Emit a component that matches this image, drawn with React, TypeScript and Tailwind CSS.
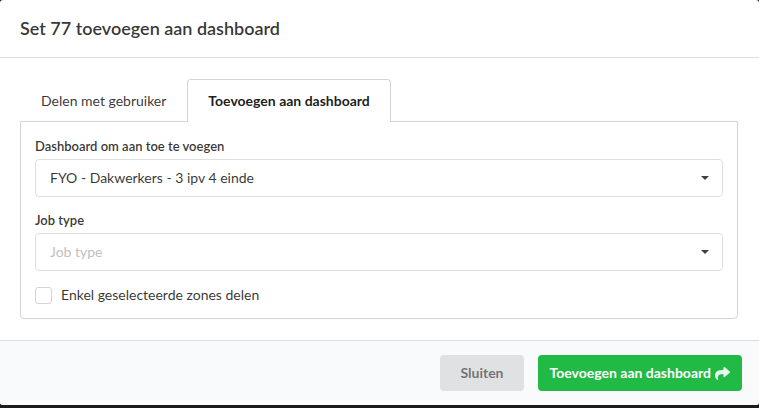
import React, { useState } from 'react';
import { FaShare } from 'react-icons/fa';

// Select with its label above and a small caret on the right
function SelectField({
  id,
  label,
  options,
  placeholder,
  initial = '',
}: {
  id: string;
  label: string;
  options: string[];
  placeholder?: string;
  initial?: string;
}) {
  const [value, setValue] = useState(initial);

  return (
    <div>
      <label htmlFor={id} className="mb-1 block text-[13px] leading-[18px] font-semibold">
        {label}
      </label>
      <div className="relative">
        <select
          id={id}
          value={value}
          onChange={(e) => setValue(e.target.value)}
          className={`block h-[38px] w-full appearance-none rounded border border-[#dededf] bg-white px-3.5 text-sm ${
            value ? 'text-black/80' : 'text-[#bfbfbf]'
          }`}
        >
          {placeholder && <option value="">{placeholder}</option>}
          {options.map((o) => (
            <option key={o} value={o}>
              {o}
            </option>
          ))}
        </select>
        <svg
          viewBox="0 0 8 4"
          className="pointer-events-none absolute top-[17px] right-3.5 h-1 w-2 fill-[#404040]"
          aria-hidden="true"
        >
          <path d="M0 0h8L4 4z" />
        </svg>
      </div>
    </div>
  );
}

export default function App() {
  const [tab, setTab] = useState('dashboard');
  const [onlySelected, setOnlySelected] = useState(false);

  const tabs = [
    { id: 'user', label: 'Delen met gebruiker' },
    { id: 'dashboard', label: 'Toevoegen aan dashboard' },
  ];

  return (
    <div className="min-h-screen bg-[#1b1c1d] font-['Lato',sans-serif] text-sm text-black/80">
      <div role="dialog" aria-labelledby="title" className="overflow-hidden rounded-[3px] bg-white">
        <header className="border-b border-[#dededf] px-5 py-4">
          <h1 id="title" className="text-lg leading-[25px] font-semibold">
            Set 77 toevoegen aan dashboard
          </h1>
        </header>

        <div className="py-[21px] pr-[21px] pl-5">
          <div role="tablist" className="flex">
            {tabs.map((t) => (
              <button
                key={t.id}
                type="button"
                role="tab"
                aria-selected={tab === t.id}
                onClick={() => setTab(t.id)}
                className={`relative z-10 -mb-px h-[43px] rounded-t border border-b-0 px-5 text-sm ${
                  tab === t.id
                    ? 'border-[#d4d4d5] bg-white font-bold text-black/90'
                    : 'border-transparent'
                }`}
              >
                {t.label}
              </button>
            ))}
          </div>

          <form className="rounded-b border border-[#d4d4d5] px-3.5 pt-[15px] pb-[13px]">
            <SelectField
              id="dashboard"
              label="Dashboard om aan toe te voegen"
              options={['FYO - Dakwerkers - 3 ipv 4 einde']}
              initial="FYO - Dakwerkers - 3 ipv 4 einde"
            />
            <div className="mt-3.5">
              <SelectField id="job" label="Job type" options={[]} placeholder="Job type" />
            </div>
            <label className="mt-3.5 flex items-center gap-[9px] leading-5">
              <input
                type="checkbox"
                checked={onlySelected}
                onChange={(e) => setOnlySelected(e.target.checked)}
                className="size-[17px] appearance-none rounded-[3px] border border-[#d4d4d5] bg-white checked:bg-[#21ba45]"
              />
              Enkel geselecteerde zones delen
            </label>
          </form>
        </div>

        <footer className="flex justify-end gap-3.5 border-t border-[#dededf] bg-[#f9fafb] px-[17px] py-3.5">
          <button type="button" className="h-9 rounded bg-[#e0e1e2] px-5 font-bold text-black/50">
            Sluiten
          </button>
          <button
            type="button"
            className="flex h-9 items-center gap-1 rounded bg-[#21ba45] px-3 font-bold text-white"
          >
            Toevoegen aan dashboard
            <FaShare className="size-[15px] opacity-90" />
          </button>
        </footer>
      </div>
    </div>
  );
}
